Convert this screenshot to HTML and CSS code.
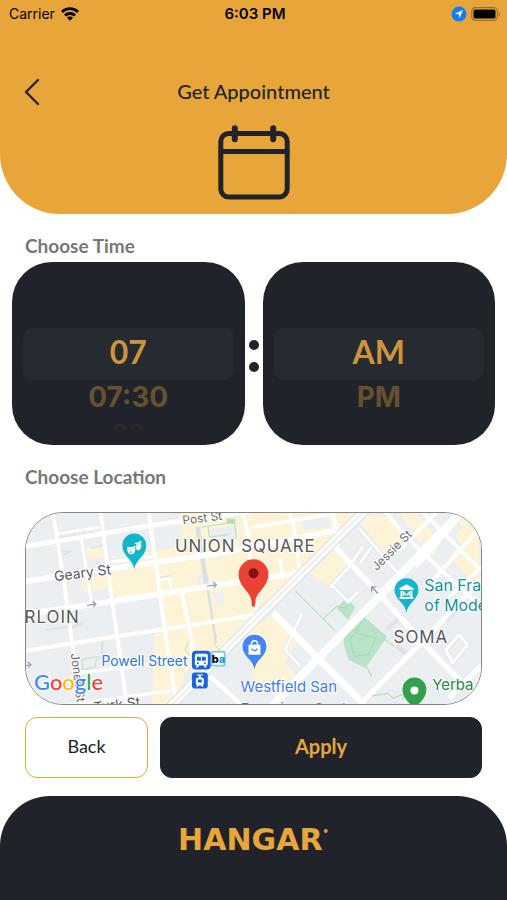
FILE: index.html
```html
<!DOCTYPE html>
<html lang="en">
<head>
    <meta charset="UTF-8">
    <title>Get Appointment</title>
    <meta name="viewport" content="width=device-width, initial-scale=1.0">
    <link rel="stylesheet" href="styles.css">
</head>
<body>
    <header class="header">
        <div class="status-bar">
            <div class="status-left">
                <span>Carrier</span>
                <svg width="18" height="14" viewBox="0 0 18 14" aria-hidden="true">
                    <g fill="none" stroke="#000" stroke-width="2.8">
                        <path d="M1 5a11.4 11.4 0 0 1 16 0"/>
                        <path d="M4 8.500a7.200 7.200 0 0 1 10 0"/>
                    </g>
                    <path d="M9 13.800L6 10.800a4.200 4.200 0 0 1 6 0z"/>
                </svg>
            </div>
            <span class="status-time">6:03 PM</span>
            <div class="status-right">
                <svg width="16" height="16" viewBox="0 0 16 16" aria-hidden="true">
                    <circle cx="8" cy="8" r="7.5" fill="#147df5"/>
                    <path d="M12 4L3.800 7.700l4 .6.6 4z" fill="#fff"/>
                </svg>
                <svg width="30" height="14" viewBox="0 0 30 14" aria-hidden="true">
                    <rect x=".7" y=".7" width="25.6" height="12.6" rx="3.6" fill="none" stroke="#9b722d" stroke-width="1.2"/>
                    <rect x="2.5" y="2.5" width="22" height="9" rx="1.6"/>
                    <path d="M27.600 4.800a2.500 2.500 0 0 1 0 4.400z" fill="#9b722d"/>
                </svg>
            </div>
        </div>

        <div class="title-bar">
            <button class="back-arrow" type="button" aria-label="Go back">
                <svg width="16" height="28" viewBox="0 0 16 28">
                    <path d="M14 2L2 14l12 12" fill="none" stroke="#20242a" stroke-width="2.4" stroke-linecap="round" stroke-linejoin="round"/>
                </svg>
            </button>
            <h1>Get Appointment</h1>
        </div>

        <svg class="calendar-icon" width="72" height="76" viewBox="0 0 72 76" aria-hidden="true">
            <g fill="none" stroke="#20242a" stroke-width="5" stroke-linecap="round">
                <rect x="2.8" y="8.5" width="66.4" height="63.5" rx="8"/>
                <path d="M3 26.500h66"/>
                <path d="M16.800 3.200v11M55.200 3.200v11" stroke-width="6"/>
            </g>
        </svg>
    </header>

    <main class="content">
        <h2>Choose Time</h2>
        <div class="time-pickers">
            <fieldset class="wheel" aria-label="Hour">
                <label class="selected"><input type="radio" name="hour" value="07" checked>07</label>
                <label class="next"><input type="radio" name="hour" value="07:30">07:30</label>
                <label class="last"><input type="radio" name="hour" value="08">08</label>
            </fieldset>
            <div class="colon"><i></i><i></i></div>
            <fieldset class="wheel" aria-label="Period">
                <label class="selected"><input type="radio" name="period" value="AM" checked>AM</label>
                <label class="next"><input type="radio" name="period" value="PM">PM</label>
            </fieldset>
        </div>

        <h2>Choose Location</h2>
        <div class="map">
            <svg viewBox="0 0 458 193" preserveAspectRatio="xMidYMid slice">
                <rect width="458" height="193" fill="#eceff1"/>

                <!-- west half, three units to the pixel -->
                <g transform="scale(.33333) translate(-30 -36)">
                    <g fill="#fdf3d6">
                        <path d="M490 30H1050L720 365 480 620H410L418 400 445 385 428 275 300 296 290 260 205 275 200 240 285 215 420 190 415 160 215 175 205 145 260 140 270 170 500 140z"/>
                    </g>
                    <g fill="#eceff1">
                        <path d="M585 85l80-10 4 40-80 12zM600 280l26-4 3 34-26 4zM545 225l35-6 5 38-35 5zM510 520l60-50 50 40-80 100h-60z"/>
                    </g>
                    <g fill="none" stroke="#dfe3e7" stroke-width="5">
                        <path d="M130 95l50-7M125 112l110-14M175 85v24M205 82v24M135 150l30 4-25 10M225 142l35-6M90 390l110-16M160 388l45-18M470 265l-6-38-30 5"/>
                    </g>
                    <g fill="none" stroke="#b4dfbd" stroke-width="3">
                        <path d="M560 80l100-15 5 50M580 80l4 30 60-8M260 425v45l-18 10-4 24-36 6-4-30 50-10M520 430l-10 20 16 20M605 405l-6 30 20 20"/>
                    </g>
                    <rect x="636" y="54" width="26" height="16" fill="#b4dfbd"/>
                    <g fill="none" stroke="#dadfe4" stroke-width="14">
                        <path d="M548 80l28 180"/>
                        <path d="M578 260l26 170" stroke-width="7"/>
                    </g>
                    <g fill="none" stroke="#fff" stroke-linejoin="round">
                        <path stroke-width="14" d="M30 138L400 76 720 30"/>
                        <path stroke-width="17" d="M30 243L280 206 560 166 720 140 965 90"/>
                        <path stroke-width="17" d="M30 342L230 313 590 258 765 232 855 216"/>
                        <path stroke-width="12" d="M30 453L300 410 530 376 745 340"/>
                        <path stroke-width="10" d="M190 520L350 500 530 472M30 635L480 572M285 185l130-16"/>
                        <path stroke-width="11" d="M110 30l12 70 26 170 20 150 28 195M255 30l16 130 30 220 34 240"/>
                        <path stroke-width="8" d="M196 110l32 200M120 100l130-20M437 240l26-6 6 30"/>
                        <path stroke-width="12" d="M400 30l30 215 20 150 35 220M500 275l25 120 15 90M685 30l16 80 24 220"/>
                        <path stroke-width="13" d="M585 530l100 90"/>
                    </g>
                    <g fill="none" stroke="#9aa2bd" stroke-width="4">
                        <path d="M214 316l26-4m-9-8l10 8-8 9M576 258l28-4m-9-8l10 8-8 9M30 498l14-3m-9-8l10 8-8 9"/>
                    </g>
                </g>

                <!-- east half -->
                <g transform="scale(.33333) translate(678 -36)">
                    <path fill="#fdf3d6" d="M345 45h70l60 75-60 55-85-90zM180 220l75-75 40 45-55 70zM450 36h50l50 60-40 30zM545 95l30 30-25 45-35-30zM610 36h80v160l-50-50-20-40 20-25zM600 170l30-30 60 60v40l-20 5zM0 380l65-30 80 75-45 60 35 40-60 65-70-50z"/>
                    <path fill="#eceff1" d="M265 120l70-50 40 50-60 80zM150 60l80-20 12 40-80 8z"/>
                    <path fill="#b9e3c6" d="M285 400l55-52 72 62-30 45-35 50-52-25-14-50zM260 325l30-34 26 32-22 36z"/>
                    <g fill="none" stroke="#a3d7b3" stroke-width="3">
                        <path d="M135 272l120 120M220 355l40-35 35 5M340 350l-20 50 60 15-25 50-40 5-15-50 25-35M350 500l15 30M400 415l35 25M365 590l50-8 15 14 40-14-12 20"/>
                    </g>
                    <g fill="none" stroke="#dfe3e7" stroke-width="14" stroke-linejoin="round">
                        <path d="M240 262l60-65 40-60M245 255l50 50 30-30M155 340l-50 110 45 50M325 80l130 150M330 190l35-50M590 450l40-45 25 30-45 55zM410 390l45-40M440 440l30 20M590 360l30-30"/>
                    </g>
                    <g fill="none" stroke="#fff" stroke-width="9" stroke-linejoin="round">
                        <path d="M240 262l60-65 40-60M245 255l50 50 30-30M155 340l-50 110 45 50M325 80l130 150M330 190l35-50M590 450l40-45 25 30-45 55z"/>
                        <path stroke-width="10" d="M0 82l250-42M118 30l14 60 18 125M90 175l6 45"/>
                        <path stroke-width="16" d="M248 30l14 75-4 38 130 138 135 150 175 180"/>
                        <path stroke-width="21" d="M68 338l135 137 140 140"/>
                        <path stroke-width="24" d="M645 25L390 288 205 475 65 620"/>
                        <path stroke-width="15" d="M710 225L520 425 335 610M710 485l-110 110"/>
                        <path stroke-width="11" d="M405 30l65 80 240 225M515 30l190 190M450 150L560 36M500 200l145-165M550 240L700 75M600 290l110-100"/>
                    </g>
                    <path fill="none" stroke="#d5d9de" stroke-width="29" d="M350 25L5 368-250 630"/>
                    <path fill="none" stroke="#fff" stroke-width="24" d="M350 25L5 368-250 630"/>
                    <path fill="none" stroke="#d5d9de" stroke-width="3" d="M350 25L5 368-250 630"/>
                    <path fill="none" stroke="#8f8fc0" stroke-width="4" d="M385 280l-19-20m0 14v-14h14"/>
                </g>

                <g class="street-name">
                    <text transform="translate(158 12) rotate(-7)">Post St</text>
                    <text transform="translate(353 59) rotate(-45)">Jessie St</text>
                    <text transform="translate(45 142) rotate(83)">Jones St</text>
                </g>
                <g class="street-name large">
                    <text transform="translate(29 69) rotate(-7)">Geary St</text>
                    <text transform="translate(69 201) rotate(-7)">Turk St</text>
                </g>
                <g class="district">
                    <text x="150" y="40">UNION SQUARE</text>
                    <text x="54" y="111" text-anchor="end">TENDERLOIN</text>
                    <text x="370" y="131">SOMA</text>
                </g>
                <g class="place">
                    <text class="station" x="76" y="154" fill="#2f74d8">Powell Street</text>
                    <text x="216" y="181" fill="#3f7ee8">Westfield San</text>
                    <text x="216" y="203" fill="#3f7ee8">Francisco Centre</text>
                    <text class="museum" x="401" y="79" fill="#11939f">San Francisco</text>
                    <text class="museum" x="401" y="99" fill="#11939f">of Modern Art</text>
                    <text x="409" y="179" fill="#23893f">Yerba Buena</text>
                </g>

                <!-- transit badges -->
                <rect x="167" y="139" width="19" height="19" rx="4" fill="#1a66d6"/>
                <path d="M172 142h9q2 0 2 2v8q0 2-2 2l1 2h-2l-1-2h-5l-1 2h-2l1-2q-2 0-2-2v-8q0-2 2-2zm0 3v4h4v-4zm5 0v4h4v-4z" fill="#fff" fill-rule="evenodd"/>
                <circle cx="173" cy="151.500" r="1" fill="#1a66d6"/>
                <circle cx="180" cy="151.500" r="1" fill="#1a66d6"/>
                <rect x="187" y="140" width="13" height="14" rx="1" fill="#fff" stroke="#82cbe8" stroke-width="2"/>
                <text class="bart" x="187" y="151">b<tspan fill="#0aa0d5">a</tspan></text>
                <rect x="167" y="161" width="16" height="16" rx="3" fill="#1a66d6"/>
                <path d="M172 163h6v1h-2v2q3 0 3 2v4l-1 2 1 1h-2l-1-1h-2l-1 1h-2l1-1-1-2v-4q0-2 3-2v-2h-2zm1 5v3h4v-3z" fill="#fff" fill-rule="evenodd"/>

                <!-- pins -->
                <g transform="translate(109 57)">
                    <path d="M0 0C-1-10-12-13-12-24A12 12 0 0 1 12-24C12-13 1-10 0 0z" fill="#12b5cb"/>
                    <path d="M-7-23q4 2 8-1v5q-1 4-4 4t-4-4zM0-27q3 1 7-2v5q0 4-3 5l-2-1v-5z" fill="#fff"/>
                    <path d="M-5-20l1 1M-1-21l-1 1M-5-17q2-1 3 0M3-25v1M6-26v1" stroke="#12b5cb" fill="none"/>
                </g>
                <g transform="translate(383 101)">
                    <path d="M0 0C-1-10-12-13-12-23A12 12 0 0 1 12-23C12-13 1-10 0 0z" fill="#12b5cb"/>
                    <path d="M-7-25l7-4 7 4v2H-7zM-6-22h2v6h-2zM4-22h2v6H4zM-7-16H7v2H-7z" fill="#fff"/>
                    <path d="M-3-17v-4l3 3 3-3v4" fill="none" stroke="#fff" stroke-width="1.300"/>
                </g>
                <g transform="translate(230 158)">
                    <path d="M0 0C-1-10-12-13-12-23A12 12 0 0 1 12-23C12-13 1-10 0 0z" fill="#4285f4"/>
                    <path d="M-6-25H6v10H-6z" fill="#fff"/>
                    <path d="M-3-24v-2a3 3 0 0 1 6 0v2" fill="none" stroke="#fff" stroke-width="1.500"/>
                    <path d="M-3-21q3 4 6 0" fill="none" stroke="#4285f4" stroke-width="1.300"/>
                </g>
                <g transform="translate(391 202)">
                    <path d="M0 0C-1-10-12-13-12-24A12 12 0 0 1 12-24C12-13 1-10 0 0z" fill="#34a04c"/>
                    <circle cy="-23" r="4" fill="#fff"/>
                </g>
                <g transform="translate(229 95)">
                    <path d="M0 0C-1.500 0-2-3-2-6-3-16-15-20-15-33A15 15 0 0 1 15-33C15-20 3-16 2-6 2-3 1.500 0 0 0z" fill="#ea4335"/>
                    <circle cy="-34" r="5" fill="#811411"/>
                </g>

                <text class="google" x="8" y="179"><tspan fill="#4285f4">G</tspan><tspan fill="#ea4335">o</tspan><tspan fill="#fbbc05">o</tspan><tspan fill="#4285f4">g</tspan><tspan fill="#34a853">l</tspan><tspan fill="#ea4335">e</tspan></text>
            </svg>
        </div>

        <div class="actions">
            <button class="btn btn-back" type="button">Back</button>
            <button class="btn btn-apply" type="button">Apply</button>
        </div>
    </main>

    <footer class="footer">
        <div class="logo">HANGAR<sup>•</sup></div>
    </footer>
</body>
</html>
```

FILE: styles.css
```css
:root {
    --orange: #e8a63a;
    --dark: #20242a;
}

* {
    box-sizing: border-box;
}

body {
    margin: 0;
    min-height: 100vh;
    display: flex;
    flex-direction: column;
    background: #fff;
    color: var(--dark);
    font-family: Lato, "Open Sans", sans-serif;
}

h1, h2 {
    margin: 0;
}

button {
    font-family: inherit;
    cursor: pointer;
}

/* Header */
.header {
    display: flex;
    flex-direction: column;
    align-items: center;
    height: 214px;
    background: var(--orange);
    border-radius: 0 0 60px 60px;
}

.status-bar {
    width: 100%;
    display: grid;
    grid-template-columns: 1fr auto 1fr;
    align-items: center;
    height: 28px;
    padding: 0 6px 0 9px;
    color: #000;
    font: 14px/20px Inter, sans-serif;
}

.status-left, .status-right {
    display: flex;
    align-items: center;
    gap: 6px;
}

.status-right {
    justify-content: flex-end;
    gap: 4px;
}

.status-time {
    font-size: 15px;
    font-weight: 600;
}

.title-bar {
    width: 100%;
    display: grid;
    grid-template-columns: 40px 1fr 40px;
    align-items: center;
    height: 28px;
    margin-top: 50px;
    padding: 0 12px;
}

.back-arrow {
    display: flex;
    justify-content: center;
    padding: 0;
    border: none;
    background: none;
}

.title-bar h1 {
    font-size: 20px;
    font-weight: 500;
    line-height: 24px;
    padding-bottom: 2px;
    text-align: center;
}

.calendar-icon {
    margin-top: 19px;
}

/* Time */
.content {
    flex: 1;
    padding: 18px 12px;
}

.content h2 {
    padding: 0 13px;
    color: #777;
    font-size: 19px;
    font-weight: 700;
    line-height: 28px;
}

.time-pickers {
    display: flex;
    align-items: center;
    margin: 2px 0 18px;
}

.wheel {
    flex: 1;
    min-width: 0;
    height: 183px;
    margin: 0;
    padding: 66px 11px 0;
    border: none;
    border-radius: 40px;
    background: var(--dark);
    color: var(--orange);
    font-weight: 700;
    text-align: center;
    overflow: hidden;
}

.wheel label {
    display: block;
}

.wheel input {
    position: absolute;
    opacity: 0;
    pointer-events: none;
}

.wheel .selected {
    height: 52px;
    border-radius: 10px;
    background: #262a31;
    color: #cc953d;
    font-size: 32px;
    line-height: 48px;
}

.wheel .next {
    color: #67502e;
    font-family: Inter, sans-serif;
    font-size: 28px;
    line-height: 34px;
}

.wheel .last {
    height: 8px;
    margin-top: 8px;
    color: #2b2a2a;
    font-family: Inter, sans-serif;
    font-size: 26px;
    line-height: 24px;
    overflow: hidden;
}

.colon {
    width: 18px;
    display: flex;
    flex-direction: column;
    align-items: center;
    gap: 12px;
    padding-top: 4px;
}

.colon i {
    width: 10px;
    height: 10px;
    border-radius: 50%;
    background: var(--dark);
}

/* Location */
.map {
    height: 193px;
    margin: 21px 13px 12px;
    border: 1px solid #858585;
    border-radius: 38px;
    overflow: hidden;
}

.map svg {
    display: block;
    width: 100%;
    height: 100%;
    font-family: Inter, sans-serif;
}

.map text {
    paint-order: stroke;
    stroke: #fff;
    stroke-width: 2px;
    stroke-linejoin: round;
}

.street-name {
    fill: #686b70;
    font-size: 12px;
}

.street-name.large {
    fill: #55585c;
    font-size: 14px;
}

.district {
    fill: #55585c;
    font-size: 17px;
    letter-spacing: 1px;
}

.place {
    font-size: 15px;
}

.place .station {
    font-size: 14px;
}

.place .museum {
    font-size: 16px;
}

.map .bart {
    stroke: none;
    font-size: 11px;
    font-weight: 800;
}

.map .google {
    font-family: Lato, sans-serif;
    font-size: 22px;
    font-weight: 500;
}

/* Buttons */
.actions {
    display: grid;
    grid-template-columns: 123px 1fr;
    gap: 12px;
    padding: 0 13px;
}

.btn {
    height: 61px;
    padding: 0 12px 4px;
    border: 1px solid var(--dark);
    border-radius: 12px;
}

.btn-back {
    border-color: var(--orange);
    background: #fff;
    color: var(--dark);
    font-size: 18px;
}

.btn-apply {
    background: var(--dark);
    color: var(--orange);
    font-size: 20px;
    font-weight: 700;
}

/* Footer */
.footer {
    display: flex;
    justify-content: center;
    height: 105px;
    padding-top: 26px;
    border-radius: 50px 50px 0 0;
    background: var(--dark);
}

.logo {
    color: var(--orange);
    font: bold 30px/36px "DejaVu Sans", sans-serif;
}

.logo sup {
    font-size: 10px;
    line-height: 20px;
    vertical-align: top;
}
```
